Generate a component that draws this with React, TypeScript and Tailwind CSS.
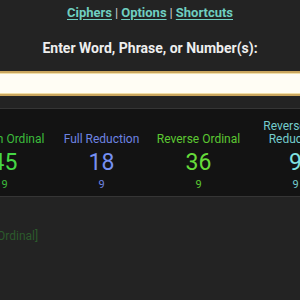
const CIPHERS = [
  { name: 'English Ordinal', value: 45, reduced: 9, label: 'text-[#3cbc3c]', num: 'text-[#45d845]' },
  { name: 'Full Reduction', value: 18, reduced: 9, label: 'text-[#6e84e2]', num: 'text-[#7690f2]' },
  { name: 'Reverse Ordinal', value: 36, reduced: 9, label: 'text-[#5cc832]', num: 'text-[#66dc3a]' },
  { name: 'Reverse Full Reduction', value: 9, reduced: 9, label: 'text-[#74cccc]', num: 'text-[#80e0e0]' },
]

export default function App() {
  return (
    <div className="min-h-screen overflow-hidden bg-[#232323] font-['Roboto',sans-serif]">
      <nav className="pt-[4px] text-center text-[13px] font-bold leading-[18px] text-[#ccc]">
        <a className="text-[#6fcfc0] underline underline-offset-2">Ciphers</a>
        <span className="mx-[3px] font-normal">|</span>
        <a className="text-[#6fcfc0] underline underline-offset-2">Options</a>
        <span className="mx-[3px] font-normal">|</span>
        <a className="text-[#6fcfc0] underline underline-offset-2">Shortcuts</a>
      </nav>

      <h2 className="mt-[17px] text-center text-[14px] font-bold leading-[18px] text-[#eeeeee]">
        Enter Word, Phrase, or Number(s):
      </h2>

      <div className="-mx-2 mt-[14px] h-[25px] border-y-2 border-[#caa65e] bg-[#fffdf4] shadow-[inset_0_1px_0_#f1dfa8,inset_0_-1px_0_#f1dfa8]" />

      {/* Cipher totals panel */}
      <div className="mt-[12px] flex justify-center border-y border-[#353535] bg-[#131313] pt-[11px] pb-[5px]">
        {CIPHERS.map((c) => (
          <div key={c.name} className="flex w-[97px] shrink-0 flex-col items-center text-center">
            <div className={`flex h-[26px] items-end justify-center text-[12px] leading-[13px] ${c.label}`}>
              {c.name}
            </div>
            <div className={`mt-[2px] text-[23px] leading-[30px] ${c.num}`}>{c.value}</div>
            <div className={`text-[11px] leading-[13px] ${c.label}`}>{c.reduced}</div>
          </div>
        ))}
      </div>

      <div className="mt-[32px] ml-[-48px] text-[12px] leading-[14px] text-[#2c5a2c]">[English Ordinal]</div>
    </div>
  )
}
